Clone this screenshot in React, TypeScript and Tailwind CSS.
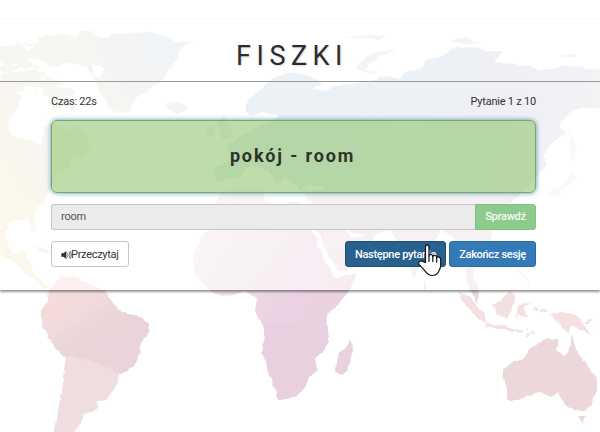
const roboto = "font-['Roboto','Liberation_Sans',sans-serif]";

function WorldMap() {
  return (
    <svg className="absolute inset-0 h-[432px] w-[600px]" viewBox="0 0 600 432" aria-hidden="true">
      <defs>
        <linearGradient id="na" gradientUnits="userSpaceOnUse" x1="0" y1="200" x2="210" y2="50">
          <stop offset="0" stopColor="#f5eccf" />
          <stop offset="0.3" stopColor="#efe6dc" />
          <stop offset="0.62" stopColor="#ebe7e0" />
          <stop offset="0.66" stopColor="#e2e3e5" />
          <stop offset="1" stopColor="#d9e4eb" />
        </linearGradient>
        <linearGradient id="asia" gradientUnits="userSpaceOnUse" x1="240" y1="90" x2="600" y2="150">
          <stop offset="0" stopColor="#cbdbe5" />
          <stop offset="0.5" stopColor="#d0dee7" />
          <stop offset="0.66" stopColor="#d5d9e2" />
          <stop offset="1" stopColor="#e2dfe7" />
        </linearGradient>
        <linearGradient id="south" gradientUnits="userSpaceOnUse" x1="0" y1="150" x2="0" y2="280">
          <stop offset="0" stopColor="#d6dbe3" />
          <stop offset="0.4" stopColor="#e8dde4" />
          <stop offset="1" stopColor="#eddadf" />
        </linearGradient>
        <linearGradient id="africa" gradientUnits="userSpaceOnUse" x1="195" y1="240" x2="340" y2="340">
          <stop offset="0" stopColor="#f3e5e2" />
          <stop offset="0.35" stopColor="#ecdce4" />
          <stop offset="0.6" stopColor="#ecd3e3" />
          <stop offset="1" stopColor="#e8d0de" />
        </linearGradient>
        <linearGradient id="sa" gradientUnits="userSpaceOnUse" x1="60" y1="300" x2="90" y2="345">
          <stop offset="0" stopColor="#f4dcdb" />
          <stop offset="0.45" stopColor="#f1dadb" />
          <stop offset="0.6" stopColor="#ecd7da" />
          <stop offset="1" stopColor="#ead4d9" />
        </linearGradient>
        <filter id="coast" x="0" y="0" width="600" height="432" filterUnits="userSpaceOnUse">
          <feTurbulence type="fractalNoise" baseFrequency="0.12" numOctaves="2" seed="4" />
          <feDisplacementMap in="SourceGraphic" scale="4" xChannelSelector="R" yChannelSelector="G" />
        </filter>
        <filter id="arctic" x="0" y="0" width="600" height="432" filterUnits="userSpaceOnUse">
          <feTurbulence type="fractalNoise" baseFrequency="0.05 0.13" numOctaves="3" seed="9" />
          <feDisplacementMap in="SourceGraphic" scale="20" xChannelSelector="R" yChannelSelector="G" />
        </filter>
      </defs>

      {/* Arctic Canada */}
      <g filter="url(#arctic)" fill="#eee9df">
        <path d="M0 50L30 38L80 34L110 36L96 48L72 58L58 66L40 70L20 68L0 72Z" />
        <path d="M0 74L30 72L48 76L62 84L74 100L72 116L58 108L46 92L24 90L0 94Z" />
      </g>

      <g filter="url(#coast)">
        {/* Greenland and Iceland */}
        <path fill="url(#na)" d="M58 66L78 48L115 34L150 32L164 36L176 42L192 41L180 50L175 62L168 72L160 82L148 91L136 98L128 112L114 113L106 102L98 90L94 76L84 66L66 62Z" />
        <path fill="#e2e5e7" d="M166 104L176 102L188 106L186 111L176 114L168 110Z" />
        {/* North America */}
        <path fill="url(#na)" d="M0 92L12 88L22 96L18 108L8 120L10 132L24 136L36 142L42 146L44 126L52 124L66 130L78 126L92 146L84 156L72 158L70 168L58 172L52 184L48 196L40 206L34 214L38 230L32 232L28 218L10 222L4 236L14 254L26 250L30 262L34 274L44 284L52 288L44 288L28 276L16 264L0 254Z" />
        <path fill="#f2e3df" d="M34 246L48 250L52 256L40 252Z" />
        {/* Europe and Asia */}
        <path fill="url(#asia)" d="M245 110L248 100L262 88L274 78L290 72L310 76L322 84L312 88L322 92L334 86L350 84L362 82L376 80L384 76L400 78L404 72L422 68L426 60L444 56L450 50L466 47L482 50L502 52L494 62L512 64L530 66L542 70L558 68L566 66L584 67L600 71L600 109L580 108L566 116L558 128L566 134L552 142L545 154L546 164L536 178L526 188L510 204L400 216L330 192L312 184L300 190L286 176L278 184L268 172L252 164L238 178L216 182L214 168L230 160L228 146L240 136L260 126L278 118L286 110L278 98L280 92L292 88L284 102L288 108L302 108L280 116L262 112L250 116Z" />
        <path fill="#dce5ec" d="M216 122L224 116L230 126L234 136L222 140L220 132ZM208 128L214 126L214 134L206 136Z" />
        <path fill="url(#south)" d="M300 190L510 190L506 212L494 226L490 242L496 252L488 266L478 252L472 258L474 278L480 292L478 304L468 288L464 252L452 236L440 230L432 248L422 254L418 272L414 278L402 248L390 230L374 234L370 252L354 266L338 278L330 266L312 230L316 208Z" />
        <path fill="#e0e3eb" d="M356 68L364 58L382 51L396 50L382 56L370 62L366 70L378 72L370 74ZM345 38L366 35L386 35L380 39L364 38ZM449 40L466 37L472 42L484 44L466 44ZM560 54L576 53L576 57L562 57Z" />
        <path fill="#f1edf2" d="M570 128L576 144L574 164L570 160ZM572 172L578 178L566 188L554 196L546 194L562 184Z" />

        {/* Africa and Madagascar */}
        <path fill="url(#africa)" d="M220 192L248 186L262 190L266 202L280 206L292 202L308 204L314 216L322 240L330 260L338 276L356 274L350 290L336 306L326 318L328 328L329 343L322 352L315 358L317 370L309 377L305 388L296 396L286 399L278 400L275 388L268 373L266 360L261 352L265 338L262 324L255 312L257 298L251 295L244 291L234 295L218 296L206 287L194 272L193 256L200 240L208 228Z" />
        <path fill="#e8d0de" d="M262 325L290 325L318 331L329 334L329 343L322 352L315 358L317 370L309 377L305 388L296 396L286 399L278 400L275 388L268 373L266 360L261 352L265 338Z" />
        <path fill="#ead1de" d="M350 339L353 350L347 370L341 375L336 371L338 353L346 348Z" />

        {/* South America */}
        <path fill="url(#sa)" d="M49 291L60 277L75 276L90 284L105 290L113 303L118 309L128 314L140 316L149 324L150 331L141 343L139 357L134 367L119 375L117 385L106 400L96 401L97 409L84 414L79 424L73 432L55 432L59 406L62 386L66 358L54 347L48 335L41 322L41 311L48 300Z" />
        <path fill="#efdde0" d="M66 356L90 360L119 373L117 385L106 400L96 401L97 409L84 414L79 424L73 432L55 432L59 406L62 386Z" />

        {/* Oceania */}
        <path fill="#ecd7da" d="M503 369L515 362L524 358L530 349L541 342L548 338L559 341L556 350L566 356L570 346L572 335L576 350L584 361L590 369L597 380L597 390L591 405L584 411L574 410L568 407L562 400L558 392L550 398L540 392L528 396L518 400L507 400L507 390L503 375ZM578 416L586 416L583 424Z" />
        <path fill="#f3e0e1" d="M458 291L468 296L484 312L487 323L478 319L466 305ZM486 323L504 326L520 331L503 330L485 327ZM492 305L502 300L510 291L515 296L511 312L506 319L496 314ZM550 314L562 311L576 315L586 327L592 335L580 330L572 325L570 334L558 323ZM518 305L531 303L524 307L527 318L518 314L515 325Z" />
        <path fill="none" stroke="#f1e4e6" strokeWidth="2.5" strokeDasharray="4 2 7 3" d="M510 331L528 330M526 337L534 331M534 308L550 312M580 325L595 319M518 270L528 280L530 288" />
        <path fill="#e6d9df" d="M424 280L427 288L424 291ZM472 286L478 295L477 302L472 293Z" />
      </g>
      {/* Inland and enclosed seas */}
      <g fill="#fff" filter="url(#coast)">
        <path d="M312 228L318 232L328 254L338 270L350 272L336 279L324 260ZM342 224L352 232L364 236L352 238Z" />
        <path d="M92 62L104 68L100 78L94 76ZM26 58L44 62L60 74L44 72ZM20 44L36 46L28 50ZM8 126L20 124L30 132L38 142L26 140L12 134Z" />
      </g>
    </svg>
  );
}

function VolumeIcon() {
  return (
    <svg className="-mr-px h-[10px] w-[11px] shrink-0" viewBox="0 0 11 10" aria-hidden="true">
      <path d="M0.3 3.2h2L5.4 0.9v8.2L2.3 6.8h-2z" fill="#333" />
      <path d="M6.6 3.2q1.1 1.8 0 3.6M8 2q2 3 0 6M9.2 1q2.4 4 0 8" fill="none" stroke="#444" strokeWidth="0.7" />
    </svg>
  );
}

function HandCursor() {
  return (
    <svg className="absolute left-[417px] top-[244px] h-[33px] w-[26px]" viewBox="0 0 26 33" aria-hidden="true">
      <path
        d="M8.5 18.5V3.2C8.5 0.2 12 0.2 12 3.2V12.2C12.6 9.7 15.6 10 15.8 12.6C16.7 10.7 19.5 11.2 19.7 13.7C21 12.2 23.7 13 23.7 15.7V22C23.7 24 22.6 25.4 21.8 27.2C20.3 30 18.2 31.5 15.4 31.5C11.3 31.5 9.6 29.3 7.5 26.3L2 20.3C0.7 18.2 3.2 16.3 5.2 17.1Z"
        fill="#fff"
        stroke="#111"
        strokeWidth="1.2"
        strokeLinejoin="round"
      />
      <path d="M12 12v5.5M15.8 12.6v5M19.7 13.8v4.5" stroke="#111" strokeWidth="1.2" strokeLinecap="round" />
    </svg>
  );
}

export default function App() {
  return (
    <div className={`relative h-[432px] w-[600px] overflow-hidden bg-white pt-[18px] text-[11px] leading-4 text-[#333] ${roboto}`}>
      <WorldMap />
      <main className="relative h-[272px] border-t border-[#f8f8f8] bg-white/60 shadow-[0_2px_2px_rgba(0,0,0,0.4)]">
        <h1 className="flex h-[63px] items-center justify-center border-b border-[#999] pr-[16px] pt-[11px] text-[27px] font-normal tracking-[5.5px] text-[#2c2c2c] [text-shadow:1px_1px_2px_rgba(0,0,0,0.15)]">
          FISZKI
        </h1>
        <section className="ml-[51px] w-[485px]">
          <div className="flex h-[38px] justify-between pt-[12px] tracking-[-0.22px]">
            <span>Czas: 22s</span>
            <span>Pytanie 1 z 10</span>
          </div>
          <div className="flex h-[73px] items-center justify-center rounded-[6px] border border-[#72ae62] bg-[#80bb58]/50 pb-[2px] pr-[2px] text-[18px] font-bold tracking-[1.85px] text-[#2d332b] shadow-[0_0_5px_rgba(35,110,165,0.75)]">
            pokój - room
          </div>
          <div className="mt-[11px] flex h-[26px]">
            <input
              className="min-w-0 flex-1 rounded-l-[3px] border border-r-0 border-[#c3c7cb] bg-[#ebebeb] px-[9px] pb-px text-[11px] tracking-[-0.2px] text-[#555] outline-none"
              value="room"
              readOnly
            />
            <button className="w-[61px] rounded-r-[3px] border border-[#80c184] bg-[#8dca8d] font-medium tracking-[-0.25px] text-[#f4fbf4]">
              Sprawdź
            </button>
          </div>
          <div className="mt-[11px] flex h-[26px] justify-between tracking-[-0.3px]">
            <button className="flex w-[78px] items-center rounded-[3px] border border-[#c4c4c4] bg-white pl-[9px] pt-px text-[#333]">
              <VolumeIcon />
              Przeczytaj
            </button>
            <div className="flex gap-[3px]">
              <button className="w-[101px] whitespace-nowrap rounded-[3px] border border-[#204d74] bg-[#286090] pt-px font-medium text-white">
                Następne pytanie
              </button>
              <button className="w-[87px] whitespace-nowrap rounded-[3px] border border-[#2e6da4] bg-[#337ab7] pt-px font-medium text-white">
                Zakończ sesję
              </button>
            </div>
          </div>
        </section>
      </main>
      <HandCursor />
    </div>
  );
}
